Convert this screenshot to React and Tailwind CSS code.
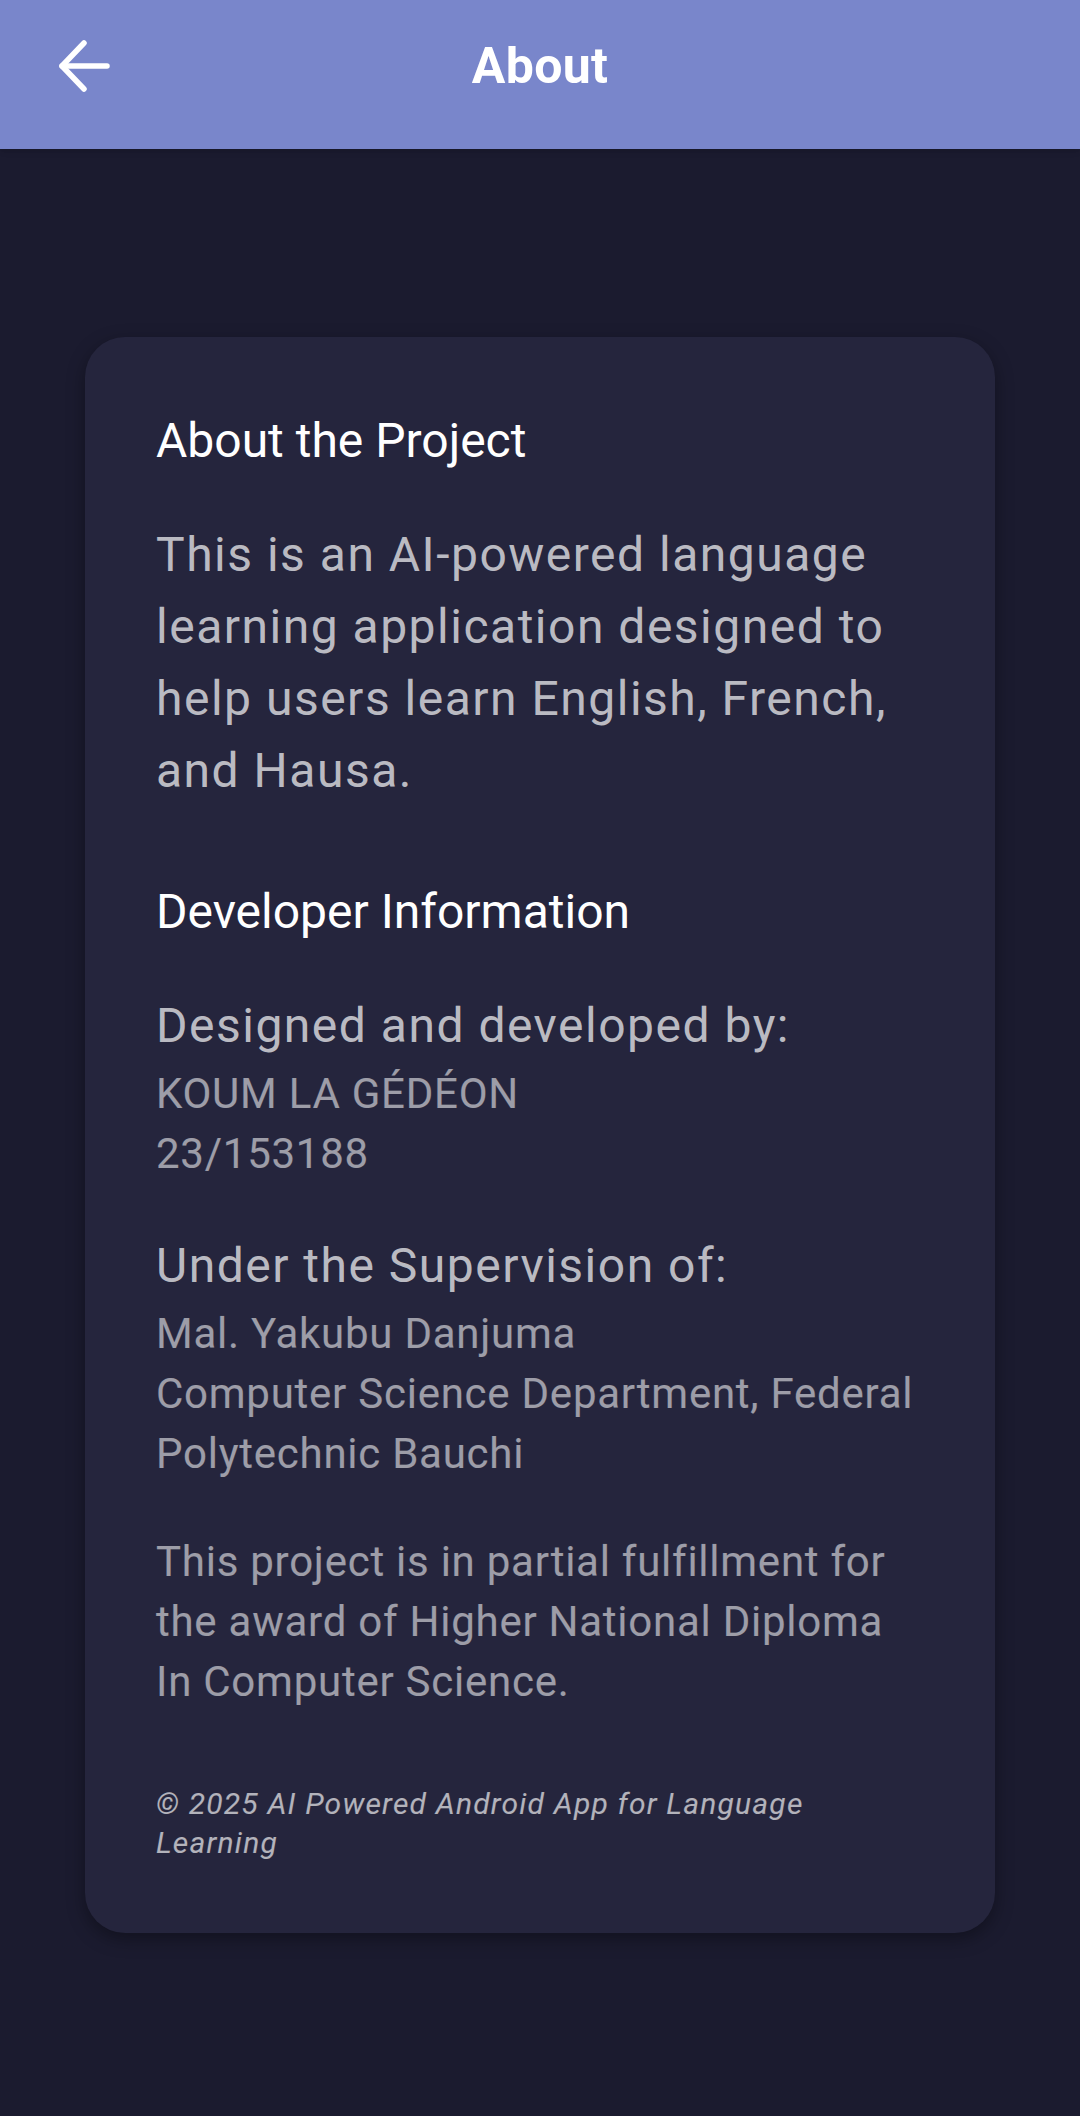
import React from "react";

export default function App() {
  return (
    <div className="min-h-screen bg-[#1b1b2f] font-['Roboto',sans-serif]">
      <header className="h-[149px] bg-[#7986cb] grid grid-cols-[1fr_auto_1fr] items-start shadow-md">
        <button className="ml-[58px] mt-[40px] w-[52px] h-[52px] flex items-center justify-center" aria-label="Back">
          <svg width="52" height="52" viewBox="0 0 52 52" fill="none" stroke="white" strokeWidth="5.5" strokeLinecap="round" strokeLinejoin="round">
            <path d="M49 26H4" />
            <path d="M26 3L4 26l22 23" />
          </svg>
        </button>
        <h1 className="mt-[38px] text-[50px] leading-[56px] font-bold text-white tracking-[0.3px]">About</h1>
        <div />
      </header>

      <main className="px-[85px] pt-[188px] pb-[184px]">
        <div className="bg-[#25253d] rounded-[40px] shadow-[0_6px_18px_rgba(0,0,0,0.35)] pl-[71px] pr-[71px] pt-[68px] pb-[71px]">
          <h2 className="text-white text-[48px] leading-[72px]">About the Project</h2>
          <p className="mt-[42px] text-white/70 text-[48px] leading-[72px] tracking-[1.5px]">
            This is an AI-powered language learning application designed to help users learn English, French, and Hausa.
          </p>

          <h2 className="mt-[69px] text-white text-[48px] leading-[72px]">Developer Information</h2>

          <div className="mt-[42px]">
            <p className="text-white/70 text-[48px] leading-[72px] tracking-[1.5px]">Designed and developed by:</p>
            <p className="mt-[2px] text-white/55 text-[42px] leading-[60px] tracking-[0.75px]">KOUM LA GÉDÉON</p>
            <p className="text-white/55 text-[42px] leading-[60px] tracking-[0.75px]">23/153188</p>
          </div>

          <div className="mt-[46px]">
            <p className="text-white/70 text-[48px] leading-[72px] tracking-[1.5px]">Under the Supervision of:</p>
            <p className="mt-[2px] text-white/55 text-[42px] leading-[60px] tracking-[0.75px]">Mal. Yakubu Danjuma</p>
            <p className="text-white/55 text-[42px] leading-[60px] tracking-[0.75px]">
              Computer Science Department, Federal Polytechnic Bauchi
            </p>
          </div>

          <p className="mt-[48px] text-white/55 text-[42px] leading-[60px] tracking-[0.75px]">
            This project is in partial fulfillment for the award of Higher National Diploma In Computer Science.
          </p>

          <p className="mt-[72px] text-white/65 text-[30px] leading-[39px] italic tracking-[1.2px]">
            © 2025 AI Powered Android App for Language Learning
          </p>
        </div>
      </main>
    </div>
  );
}
